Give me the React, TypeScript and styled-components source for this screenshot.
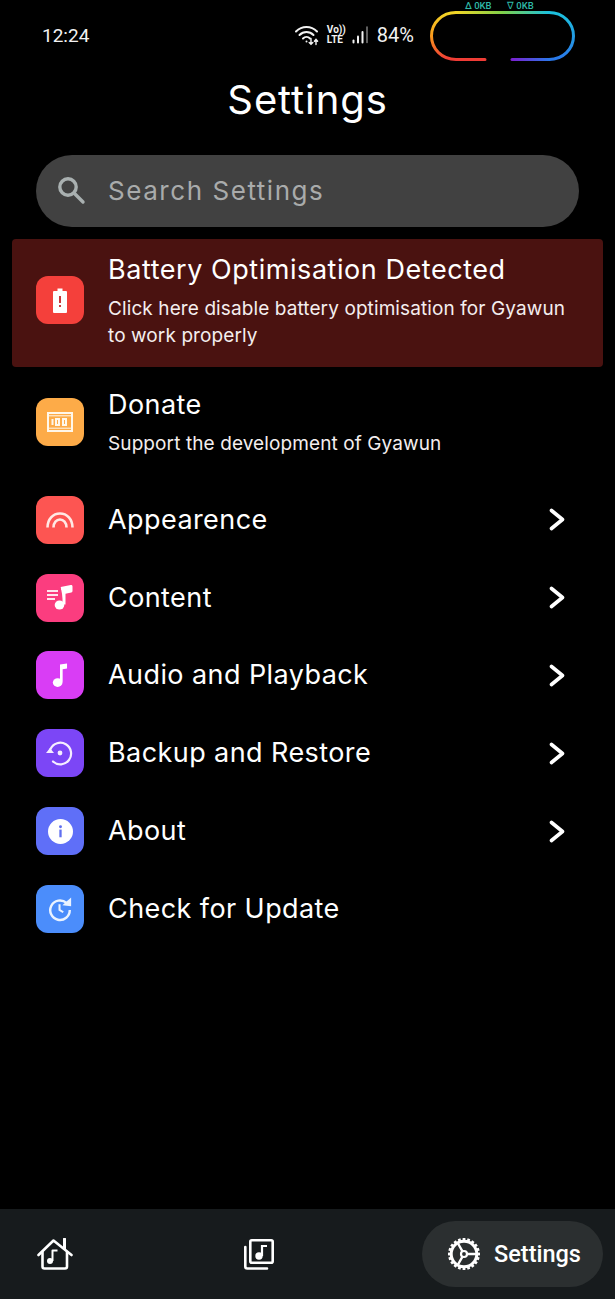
// #region imports
import React from 'react';
import styled, { createGlobalStyle } from 'styled-components';
// #endregion imports



// #region module
const GlobalStyle = createGlobalStyle`
    html, body {
        margin: 0;
        padding: 0;
        background: #000000;
    }
    * {
        box-sizing: border-box;
    }
`;

const bodyFont = '"Inter", "Noto Sans", sans-serif';

const Page = styled.div`
    width: 615px;
    height: 1299px;
    display: flex;
    flex-direction: column;
    background: #000000;
    color: #ffffff;
    font-family: ${bodyFont};
    overflow: hidden;
`;

const StatusBar = styled.div`
    height: 70px;
    flex: none;
    display: flex;
    align-items: center;
    padding: 0 40px 0 42px;
    font-family: "Roboto", sans-serif;
    font-size: 19px;
    color: #f2f2f2;
`;

const Clock = styled.span`
    flex: 1;
`;

const StatusIcons = styled.div`
    display: flex;
    align-items: center;
    gap: 7px;
    margin-right: 16px;
`;

const Percent = styled.span`
    font-size: 20px;
    margin-left: 2px;
`;

const Ring = styled.div`
    position: relative;
    width: 145px;
    height: 50px;
    margin-top: 2px;
`;

const Speed = styled.span<{ $left: number }>`
    position: absolute;
    top: -10px;
    left: ${(props) => props.$left}px;
    font-size: 9.5px;
    line-height: 10px;
    color: #2fb8a6;
    font-weight: 500;
    white-space: nowrap;
`;

const Title = styled.h1`
    margin: 0;
    height: 60px;
    flex: none;
    text-align: center;
    font-size: 40px;
    line-height: 60px;
    font-weight: 400;
    letter-spacing: 0.9px;
`;

const SearchBar = styled.div`
    flex: none;
    margin: 25px 36px 12px;
    height: 72px;
    border-radius: 36px;
    background: #414141;
    display: flex;
    align-items: center;
    padding: 0 0 2px 19px;
    gap: 21px;
    font-size: 26px;
    letter-spacing: 1.55px;
    color: #a9abab;
`;

const Banner = styled.div`
    flex: none;
    margin: 0 12px;
    height: 128px;
    border-radius: 4px;
    background: #4a1210;
    display: flex;
    align-items: center;
    padding: 0 24px 6px;
    gap: 24px;
`;

const Row = styled.div<{ $tall?: boolean }>`
    flex: none;
    height: ${(props) => (props.$tall ? 114 : 77.8)}px;
    display: flex;
    align-items: center;
    padding: ${(props) => (props.$tall ? '0 37px 5px 36px' : '0 50px 0 36px')};
    gap: 24px;
`;

const IconTile = styled.div<{ $color: string }>`
    flex: none;
    width: 48px;
    height: 48px;
    border-radius: 12px;
    background: ${(props) => props.$color};
    display: flex;
    align-items: center;
    justify-content: center;
`;

const RowText = styled.div`
    flex: 1;
    min-width: 0;
`;

const RowTitle = styled.div`
    font-size: 27px;
    line-height: 36px;
    font-weight: 400;
    letter-spacing: 0.42px;
`;

const BannerTitle = styled(RowTitle)`
    letter-spacing: 0.55px;
`;

const RowSubtitle = styled.div`
    font-size: 19px;
    line-height: 27px;
    margin-top: 7px;
    letter-spacing: 0.1px;
    color: #f4eeee;
`;

const Spacer = styled.div`
    flex: 1;
`;

const BottomNav = styled.nav`
    flex: none;
    height: 90px;
    background: #171b1d;
    display: flex;
    align-items: center;
    padding: 0 12px 0 37px;
`;

const NavIcon = styled.div`
    flex: none;
    display: flex;
    align-items: center;
    justify-content: center;
`;

const NavGap = styled.div<{ $grow: number }>`
    flex: ${(props) => props.$grow};
`;

const NavPill = styled.div`
    flex: none;
    width: 181px;
    height: 66px;
    border-radius: 33px;
    background: #2b2f30;
    display: flex;
    align-items: center;
    padding-left: 25px;
    gap: 13px;
    font-family: "Roboto", sans-serif;
    font-size: 23.5px;
    font-weight: 500;
`;

const Wifi = () => (
    <svg width="25" height="22" viewBox="0 0 25 22" fill="none" stroke="#f2f2f2" strokeWidth="2" strokeLinecap="round">
        <path d="M1 7.5C7 1.5 16 1.5 22 7.5" />
        <path d="M4.5 11C8.5 7 14.5 7 18.5 11" />
        <path d="M8 14.5C10 12.5 13 12.5 15 14.5" />
        <circle cx="11.5" cy="17.5" r="1" fill="#f2f2f2" stroke="none" />
        <path d="M16 14.5V20M14.2 18.4L16 20.2L17.8 18.4" strokeWidth="1.4" />
        <path d="M21 20.5V15.5M19.4 17.2L21 15.3L22.6 17.2" strokeWidth="1.4" />
    </svg>
);

const VoLte = styled.div`
    font-size: 10px;
    line-height: 10px;
    font-weight: 700;
    width: 18px;
    text-align: left;
    color: #f2f2f2;
`;

const Signal = () => (
    <svg width="16" height="18" viewBox="0 0 16 18" fill="none" strokeLinecap="round">
        <path d="M1.5 16.5V14.5" stroke="#f2f2f2" strokeWidth="2" />
        <path d="M6 16.5V10.5" stroke="#f2f2f2" strokeWidth="2" />
        <path d="M10.5 16.5V6" stroke="#f2f2f2" strokeWidth="2" />
        <path d="M15 16.5V1" stroke="#777777" strokeWidth="1.6" />
    </svg>
);

const RingShape = () => (
    <svg width="145" height="50" viewBox="0 0 145 50" fill="none" strokeWidth="3" strokeLinecap="round">
        <defs>
            <linearGradient id="ringLeft" x1="0" y1="0" x2="0" y2="1">
                <stop offset="0" stopColor="#f2d626" />
                <stop offset="0.5" stopColor="#fb9a1c" />
                <stop offset="1" stopColor="#ef3b36" />
            </linearGradient>
            <linearGradient id="ringTop" gradientUnits="userSpaceOnUse" x1="26" y1="0" x2="119" y2="0">
                <stop offset="0" stopColor="#f2d626" />
                <stop offset="0.5" stopColor="#7fd04a" />
                <stop offset="1" stopColor="#1cc1dd" />
            </linearGradient>
            <linearGradient id="ringRight" x1="0" y1="0" x2="0" y2="1">
                <stop offset="0" stopColor="#1cc1dd" />
                <stop offset="1" stopColor="#2a78ea" />
            </linearGradient>
            <linearGradient id="ringBottom" gradientUnits="userSpaceOnUse" x1="120" y1="0" x2="82" y2="0">
                <stop offset="0" stopColor="#2a78ea" />
                <stop offset="1" stopColor="#7a22d0" />
            </linearGradient>
        </defs>
        <path d="M55 48.5H26C12 48.5 1.500 38 1.500 25S12 1.500 26 1.500" stroke="url(#ringLeft)" />
        <path d="M26 1.500H119" stroke="url(#ringTop)" />
        <path d="M119 1.500C133 1.500 143.500 12 143.500 25S133 48.500 119 48.500" stroke="url(#ringRight)" />
        <path d="M119 48.500H82" stroke="url(#ringBottom)" />
    </svg>
);

const SearchIcon = () => (
    <svg width="32" height="32" viewBox="0 0 32 32" fill="none" stroke="#a9b0b0" strokeWidth="3.4" strokeLinecap="round">
        <circle cx="13" cy="13" r="8.2" />
        <path d="M19.5 19.5L28 28" />
    </svg>
);

const BatteryIcon = () => (
    <svg width="14" height="25" viewBox="0 0 14 25">
        <path d="M4.5 0.500h5v2.500h3.500a1 1 0 0 1 1 1V24a1 1 0 0 1-1 1H1a1 1 0 0 1-1-1V4a1 1 0 0 1 1-1h3.500z" fill="#ffffff" />
        <rect x="6" y="8" width="2" height="7" fill="#c9383a" />
        <rect x="6" y="17" width="2" height="2" fill="#c9383a" />
    </svg>
);

const DonateIcon = () => (
    <svg width="26" height="20" viewBox="0 0 26 20" fill="none" stroke="#fff7ea" strokeWidth="2">
        <rect x="1" y="1" width="24" height="18" strokeWidth="2" />
        <path d="M1 3.800h24M1 16.200h24" strokeWidth="1" />
        <path d="M5.500 7v6" />
        <rect x="9" y="7" width="3" height="6" />
        <rect x="16" y="7" width="3" height="6" />
    </svg>
);

const RainbowIcon = () => (
    <svg width="28" height="16" viewBox="0 0 28 16" fill="none" stroke="#ffe9e4" strokeWidth="2.600">
        <path d="M1.500 15.500C1.500 7 7 1.500 14 1.500s12.500 5.500 12.500 14" />
        <path d="M7.500 15.500C7.500 10.500 10.500 7.500 14 7.500s6.500 3 6.500 8" />
    </svg>
);

const ContentIcon = () => (
    <svg width="26" height="25" viewBox="0 0 26 25" fill="none">
        <path d="M0 6h11M0 10h11M0 14h8" stroke="#ffe6ef" strokeWidth="1.800" />
        <path d="M14 3.500l10-2v4.500l-7 1.500v12" stroke="#ffffff" strokeWidth="3" strokeLinejoin="round" fill="#ffffff" />
        <ellipse cx="12.500" cy="20" rx="4.800" ry="4.500" fill="#ffffff" />
    </svg>
);

const NoteIcon = () => (
    <svg width="16" height="25" viewBox="0 0 20 32" fill="#ffffff">
        <path d="M10 2l9-1.500v6.500l-5.600 1V24h-3.400z" />
        <ellipse cx="7" cy="25" rx="6.200" ry="5.600" />
    </svg>
);

const RestoreIcon = () => (
    <svg width="28" height="26" viewBox="2 0 28 26" fill="none" stroke="#f5edff" strokeWidth="2.200">
        <path d="M6.500 9A10.800 10.800 0 1 1 9 21.500" strokeLinecap="round" />
        <path d="M2 13L10 13L6 8Z" fill="#f5edff" stroke="none" />
        <circle cx="16" cy="13" r="2.400" fill="#f5edff" stroke="none" />
    </svg>
);

const InfoIcon = () => (
    <svg width="25" height="25" viewBox="0 0 26 26">
        <circle cx="13" cy="13" r="13" fill="#ffffff" />
        <rect x="11.800" y="11" width="2.400" height="8" fill="#5f6ff0" />
        <circle cx="13" cy="8" r="1.500" fill="#5f6ff0" />
    </svg>
);

const UpdateIcon = () => (
    <svg width="26" height="26" viewBox="0 0 28 28" fill="none" stroke="#eaf3ff" strokeWidth="2.600">
        <path d="M21 7.500A10.500 10.500 0 1 0 24.500 15" />
        <path d="M16.500 10L26 11V1.500Z" fill="#eaf3ff" stroke="none" />
        <path d="M13.500 9v6l4 2.500" strokeWidth="2.200" />
    </svg>
);

const RowChevron = () => (
    <svg width="16" height="23" viewBox="0 0 16 23" fill="none" stroke="#ffffff" strokeWidth="3.600" strokeLinecap="round" strokeLinejoin="round">
        <path d="M2.500 2.500L13.500 11.500L2.500 20.500" />
    </svg>
);

const HomeIcon = () => (
    <svg width="36" height="32" viewBox="0 0 36 32" fill="none" stroke="#ffffff" strokeWidth="2.600" strokeLinejoin="round" strokeLinecap="round">
        <path d="M1.500 17L16.500 2.500L34.500 17" />
        <path d="M27.500 1V10.500" strokeWidth="3" />
        <path d="M5.500 14V28.500a2 2 0 0 0 2 2H28a2 2 0 0 0 2-2V14" />
        <path d="M15.500 23V12.500h5" strokeWidth="2" strokeLinecap="butt" />
        <circle cx="13" cy="23" r="3" fill="#ffffff" stroke="none" />
    </svg>
);

const LibraryIcon = () => (
    <svg width="30" height="31" viewBox="0 0 30 31" fill="none" stroke="#ffffff" strokeWidth="2.600" strokeLinejoin="round">
        <rect x="6.300" y="1.300" width="22.400" height="22.400" rx="1.500" />
        <path d="M1.300 8V27.500a2 2 0 0 0 2 2H23" strokeLinecap="round" />
        <path d="M18 17V7h5" strokeWidth="2.200" strokeLinejoin="miter" />
        <circle cx="15" cy="17" r="3.700" fill="#ffffff" stroke="none" />
    </svg>
);

const GearIcon = () => {
    const teeth = Array.from({ length: 20 }, (_, index) => index * 18);

    return (
        <svg width="34" height="34" viewBox="0 0 34 34" fill="none" stroke="#ffffff">
            <circle cx="17" cy="17" r="12.800" strokeWidth="3" />
            {teeth.map((angle) => (
                <path key={angle} d="M17 1V4.500" strokeWidth="2.800" transform={`rotate(${angle} 17 17)`} />
            ))}
            <circle cx="17" cy="17" r="3" strokeWidth="2.200" />
            <path d="M20 17H29M15.500 14.400L11 6.500M15.500 19.600L11 27.500" strokeWidth="2.400" />
        </svg>
    );
};

const rows = [
    { title: 'Appearence', color: '#fd5552', icon: <RainbowIcon /> },
    { title: 'Content', color: '#fb3d7f', icon: <ContentIcon /> },
    { title: 'Audio and Playback', color: '#d93df5', icon: <NoteIcon /> },
    { title: 'Backup and Restore', color: '#7c46f6', icon: <RestoreIcon /> },
    { title: 'About', color: '#5f6ff8', icon: <InfoIcon /> },
    { title: 'Check for Update', color: '#4b8dfb', icon: <UpdateIcon />, plain: true },
];

const App = () => (
    <Page>
        <GlobalStyle />

        <StatusBar>
            <Clock>12:24</Clock>
            <StatusIcons>
                <Wifi />
                <VoLte>Vo))<br />LTE</VoLte>
                <Signal />
                <Percent>84%</Percent>
            </StatusIcons>
            <Ring>
                <RingShape />
                <Speed $left={35}>Δ 0KB</Speed>
                <Speed $left={77}>∇ 0KB</Speed>
            </Ring>
        </StatusBar>

        <Title>Settings</Title>

        <SearchBar>
            <SearchIcon />
            Search Settings
        </SearchBar>

        <Banner>
            <IconTile $color="#f4403b"><BatteryIcon /></IconTile>
            <RowText>
                <BannerTitle>Battery Optimisation Detected</BannerTitle>
                <RowSubtitle>Click here disable battery optimisation for Gyawun to work properly</RowSubtitle>
            </RowText>
        </Banner>

        <Row $tall={true}>
            <IconTile $color="#fdab48"><DonateIcon /></IconTile>
            <RowText>
                <RowTitle>Donate</RowTitle>
                <RowSubtitle>Support the development of Gyawun</RowSubtitle>
            </RowText>
        </Row>

        {rows.map((row) => (
            <Row key={row.title}>
                <IconTile $color={row.color}>{row.icon}</IconTile>
                <RowText>
                    <RowTitle>{row.title}</RowTitle>
                </RowText>
                {!row.plain && <RowChevron />}
            </Row>
        ))}

        <Spacer />

        <BottomNav>
            <NavIcon><HomeIcon /></NavIcon>
            <NavGap $grow={171} />
            <NavIcon><LibraryIcon /></NavIcon>
            <NavGap $grow={148} />
            <NavPill>
                <GearIcon />
                Settings
            </NavPill>
        </BottomNav>
    </Page>
);


export default App;
// #endregion module
